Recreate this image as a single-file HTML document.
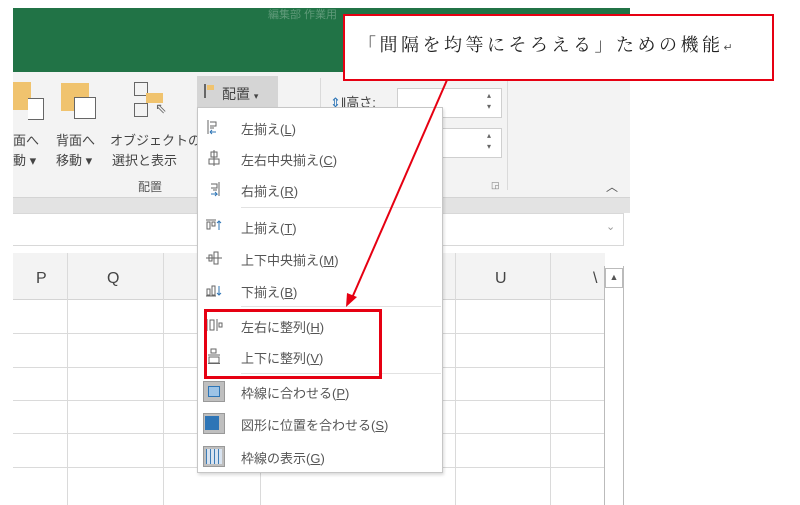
<!DOCTYPE html>
<html><head><meta charset="utf-8"><style>
*{margin:0;padding:0;box-sizing:border-box}
body{width:800px;height:505px;background:#fff;position:relative;overflow:hidden;font-family:"Liberation Sans","Noto Sans CJK JP",sans-serif;color:#444}
.a{position:absolute}
.t{font-size:13px;color:#444;white-space:nowrap}
.mi{position:absolute;left:241px;font-size:13px;color:#555;white-space:nowrap}
.ic{position:absolute;left:205px;width:18px;height:16px}
u{text-decoration:underline}
</style></head><body>
<div class="a" style="left:13px;top:8px;width:617px;height:64px;background:#217346"></div>
<div class="a" style="left:268px;top:6px;font-size:11px;color:#5f9a79">編集部 作業用</div>
<div class="a" style="left:13px;top:72px;width:617px;height:126px;background:#f3f3f3"></div>
<div class="a" style="left:13px;top:197px;width:617px;height:16px;background:#e3e3e3;border-top:1px solid #d4d4d4"></div>
<div class="a" style="left:13px;top:213px;width:617px;height:40px;background:#fff"></div>
<div class="a" style="left:13px;top:213px;width:611px;height:33px;border:1px solid #d8d8d8;border-left:none;background:#fff"></div>
<div class="a t" style="left:606px;top:220px;color:#999;font-size:11px">⌄</div>
<div class="a" style="left:13px;top:82px;width:18px;height:28px;background:#f0c36e"></div>
<div class="a" style="left:28px;top:98px;width:16px;height:22px;border:1px solid #666;background:#fff;border-left:none"></div>
<div class="a" style="left:61px;top:83px;width:28px;height:28px;background:#f0c36e"></div>
<div class="a" style="left:74px;top:97px;width:22px;height:22px;border:1px solid #666;background:#fff"></div>
<div class="a" style="left:134px;top:82px;width:14px;height:14px;border:1px solid #666"></div>
<div class="a" style="left:134px;top:103px;width:14px;height:14px;border:1px solid #666"></div>
<div class="a" style="left:146px;top:93px;width:17px;height:10px;background:#f0c36e"></div>
<div class="a t" style="left:155px;top:100px;font-size:14px;color:#666">⇖</div>
<div class="a t" style="left:13px;top:130px">面へ</div>
<div class="a t" style="left:13px;top:150px">動 ▾</div>
<div class="a t" style="left:56px;top:130px">背面へ</div>
<div class="a t" style="left:56px;top:150px">移動 ▾</div>
<div class="a t" style="left:110px;top:130px">オブジェクトの</div>
<div class="a t" style="left:112px;top:150px">選択と表示</div>
<div class="a t" style="left:138px;top:178px;font-size:12px;color:#555">配置</div>
<div class="a" style="left:197px;top:76px;width:81px;height:31px;background:#d5d5d5"></div>
<div class="a" style="left:204px;top:84px;width:3px;height:14px;border-left:2px solid #666"></div>
<div class="a" style="left:207px;top:85px;width:7px;height:5px;background:#f0c36e"></div>
<div class="a t" style="left:222px;top:84px;font-size:14px">配置 <span style="font-size:9px">▾</span></div>
<div class="a" style="left:320px;top:78px;width:1px;height:110px;background:#dadada"></div>
<div class="a t" style="left:330px;top:92px;font-size:13px"><span style="color:#2e75b6">⇕</span>‖高さ:</div>
<div class="a" style="left:397px;top:88px;width:105px;height:30px;background:#fff;border:1px solid #cfcfcf"></div>
<div class="a" style="left:397px;top:128px;width:105px;height:30px;background:#fff;border:1px solid #cfcfcf"></div>
<div class="a t" style="left:487px;top:90px;font-size:8px;line-height:11px;color:#666">▴<br>▾</div>
<div class="a t" style="left:487px;top:130px;font-size:8px;line-height:11px;color:#666">▴<br>▾</div>
<div class="a" style="left:507px;top:78px;width:1px;height:112px;background:#dadada"></div>
<div class="a t" style="left:491px;top:180px;font-size:9px;color:#777">◲</div>
<div class="a t" style="left:606px;top:178px;font-size:12px;color:#555">︿</div>
<div class="a" style="left:13px;top:253px;width:592px;height:47px;background:#f3f3f3;border-bottom:1px solid #d4d4d4"></div>
<div class="a t" style="left:36px;top:270px;font-size:16px">P</div>
<div class="a t" style="left:107px;top:270px;font-size:16px">Q</div>
<div class="a t" style="left:495px;top:270px;font-size:16px">U</div>
<div class="a t" style="left:593px;top:270px;font-size:16px">\</div>
<svg class="a" style="left:0;top:253px" width="630" height="252">
<g stroke="#dadada" stroke-width="1">
<line x1="67.5" y1="0" x2="67.5" y2="252"/><line x1="163.5" y1="0" x2="163.5" y2="252"/><line x1="260.5" y1="0" x2="260.5" y2="252"/>
<line x1="455.5" y1="0" x2="455.5" y2="252"/><line x1="550.5" y1="0" x2="550.5" y2="252"/>
<line x1="13" y1="80.5" x2="605" y2="80.5"/><line x1="13" y1="114.5" x2="605" y2="114.5"/><line x1="13" y1="147.5" x2="605" y2="147.5"/><line x1="13" y1="180.5" x2="605" y2="180.5"/><line x1="13" y1="214.5" x2="605" y2="214.5"/>
</g></svg>
<div class="a" style="left:604px;top:266px;width:20px;height:239px;background:#fff;border-left:1px solid #bbb;border-right:1px solid #bbb"></div>
<div class="a" style="left:605px;top:268px;width:18px;height:20px;border:1px solid #bbb;font-size:9px;text-align:center;line-height:16px;color:#555">▲</div>
<div class="a" style="left:197px;top:107px;width:246px;height:366px;background:#fff;border:1px solid #c6c6c6;box-shadow:1px 2px 3px rgba(0,0,0,.15)"></div>
<div class="a" style="left:241px;top:207px;width:200px;height:1px;background:#e2e2e2"></div>
<div class="a" style="left:241px;top:306px;width:200px;height:1px;background:#e2e2e2"></div>
<div class="a" style="left:241px;top:373px;width:200px;height:1px;background:#e2e2e2"></div>
<svg class="ic" style="top:119px" viewBox="0 0 18 16"><path d="M3 1V15M5 3h6v4H5M5 9h4" stroke="#666" fill="none"/><path d="M5 13h6M5 13l2-2M5 13l2 2" stroke="#2e75b6" fill="none"/></svg>
<svg class="ic" style="top:150px" viewBox="0 0 18 16"><path d="M6 2h6v5H6zM4 9h10v5H4zM9 0v16" stroke="#666" fill="none"/></svg>
<svg class="ic" style="top:181px" viewBox="0 0 18 16"><path d="M14 1V15M6 3h6v4H6M8 9h4" stroke="#666" fill="none"/><path d="M6 13h6l-2-2M12 13l-2 2" stroke="#2e75b6" fill="none"/></svg>
<svg class="ic" style="top:218px" viewBox="0 0 18 16"><path d="M1 2h10M2 4h3v7H2zM7 4h3v4H7z" stroke="#666" fill="none"/><path d="M14 12V3M12 5l2-2 2 2" stroke="#2e75b6" fill="none"/></svg>
<svg class="ic" style="top:250px" viewBox="0 0 18 16"><path d="M1 8h16M4 5h3v6H4zM9 2h4v12H9z" stroke="#666" fill="none"/></svg>
<svg class="ic" style="top:282px" viewBox="0 0 18 16"><path d="M1 14h10M2 7h3v6H2zM7 4h3v9H7z" stroke="#666" fill="none"/><path d="M14 4v9M12 11l2 2 2-2" stroke="#2e75b6" fill="none"/></svg>
<svg class="ic" style="top:317px" viewBox="0 0 18 16"><path d="M2 2v12M5 3h4v10H5zM12 2v12M14 6h3v4h-3z" stroke="#666" fill="none"/></svg>
<svg class="ic" style="top:348px" viewBox="0 0 18 16"><path d="M6 1h5v4H6zM3 7h12M4 9h10v6H4zM3 15.5h12" stroke="#666" fill="none"/></svg>
<div class="a" style="left:203px;top:381px;width:22px;height:21px;background:#bfbfbf;border:1px solid #999"></div>
<div class="a" style="left:208px;top:386px;width:12px;height:11px;background:#9dc3e6;border:1px solid #2e75b6"></div>
<div class="a" style="left:203px;top:413px;width:22px;height:21px;background:#bfbfbf;border:1px solid #999"></div>
<div class="a" style="left:205px;top:416px;width:14px;height:14px;background:#2e75b6"></div>
<div class="a" style="left:203px;top:446px;width:22px;height:21px;background:#bfbfbf;border:1px solid #999"></div>
<div class="a" style="left:206px;top:449px;width:16px;height:15px;background:repeating-linear-gradient(90deg,#2e75b6 0 1px,#dbe8f6 1px 4px),#dbe8f6;opacity:.9"></div>
<div class="mi" style="top:119px">左揃え(<u>L</u>)</div>
<div class="mi" style="top:150px">左右中央揃え(<u>C</u>)</div>
<div class="mi" style="top:181px">右揃え(<u>R</u>)</div>
<div class="mi" style="top:218px">上揃え(<u>T</u>)</div>
<div class="mi" style="top:250px">上下中央揃え(<u>M</u>)</div>
<div class="mi" style="top:282px">下揃え(<u>B</u>)</div>
<div class="mi" style="top:317px">左右に整列(<u>H</u>)</div>
<div class="mi" style="top:348px">上下に整列(<u>V</u>)</div>
<div class="mi" style="top:383px">枠線に合わせる(<u>P</u>)</div>
<div class="mi" style="top:415px">図形に位置を合わせる(<u>S</u>)</div>
<div class="mi" style="top:448px">枠線の表示(<u>G</u>)</div>
<div class="a" style="left:204px;top:309px;width:178px;height:70px;border:3px solid #e60012"></div>
<svg class="a" style="left:0;top:0" width="800" height="505"><line x1="447" y1="80" x2="352" y2="298" stroke="#e60012" stroke-width="2"/><path d="M346 307L347 293L357 297Z" fill="#e60012"/></svg>
<div class="a" style="left:343px;top:14px;width:431px;height:67px;background:#fff;border:2px solid #e60012"></div>
<div class="a" style="left:358px;top:31px;font-size:18px;letter-spacing:3.5px;color:#222;white-space:nowrap;font-family:'Liberation Serif','Noto Serif CJK SC',serif">「間隔を均等にそろえる」ための機能<span style="font-size:11px;color:#555;letter-spacing:0">↵</span></div>
</body></html>
